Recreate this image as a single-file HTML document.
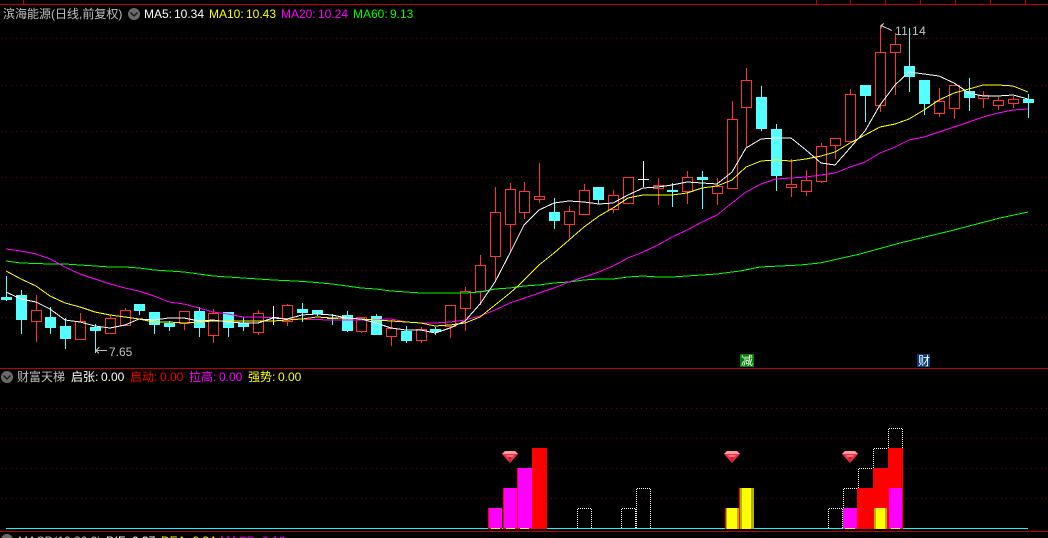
<!DOCTYPE html>
<html><head><meta charset="utf-8"><style>
html,body{margin:0;padding:0;background:#000;width:1048px;height:538px;overflow:hidden}
svg{display:block;position:absolute;left:0;top:0}
text{font-family:"Liberation Sans","WenQuanYi Zen Hei","Noto Sans CJK SC",sans-serif;font-size:12px}
</style></head><body>
<svg width="1048" height="538" viewBox="0 0 1048 538" xmlns="http://www.w3.org/2000/svg">
<rect width="1048" height="538" fill="#000"/>
<g shape-rendering="crispEdges">
<path fill="none" stroke="#800000" stroke-dasharray="1 4" d="M1 38.5H1048M1 85.5H1048M1 131.5H1048M1 177.5H1048M1 224.5H1048M1 270.5H1048M1 317.5H1048M1 408.5H1048M1 438.5H1048M1 468.5H1048M1 498.5H1048"/>
<path fill="none" stroke="#c00000" d="M0 4.5H1048M0 368.5H1048M0 531.5H1048M23.5 0V4M816.5 0V4M850.5 0V4M885.5 0V4M920.5 0V4M955.5 0V4M990.5 0V4M1025.5 0V4"/>
<!-- red wicks -->
<path fill="none" stroke="#ff3232" d="M36.5 295V342M80.5 313V340M110.5 315V334M125.5 308V326M184.5 311V330M213.5 309V343M258.5 310V335M287.5 304V326M361.5 317V333M391.5 320V346M421.5 327V343M450.5 305V338M465.5 287V331M480.5 255V305M495.5 187V282M510.5 183V253M524.5 182V219M539.5 163V203M569.5 206V238M584.5 184V215M613.5 190V213M628.5 177V204M658.5 178V205M687.5 171V204M717.5 178V205M732.5 101V189M746.5 68V147M791.5 159V197M806.5 170V196M821.5 143V183M835.5 138V159M850.5 89V142M880.5 25V112M895.5 33V95M939.5 88V117M954.5 85V119M983.5 91V108M998.5 97V110M1013.5 96V108"/>
<!-- red bodies -->
<path fill="#000" stroke="#ff3232" d="M31.5 310.5h10V321.5h-10zM75.5 321.5h10V339.5h-10zM105.5 318.5h10V333.5h-10zM120.5 310.5h10V325.5h-10zM179.5 311.5h10V323.5h-10zM208.5 313.5h10V335.5h-10zM253.5 313.5h10V332.5h-10zM282.5 305.5h10V321.5h-10zM356.5 317.5h10V331.5h-10zM386.5 328.5h10V336.5h-10zM416.5 329.5h10V340.5h-10zM445.5 305.5h10V326.5h-10zM460.5 291.5h10V308.5h-10zM475.5 265.5h10V291.5h-10zM490.5 212.5h10V256.5h-10zM505.5 189.5h10V224.5h-10zM519.5 191.5h10V212.5h-10zM534.5 196.5h10V199.5h-10zM564.5 211.5h10V224.5h-10zM579.5 190.5h10V214.5h-10zM608.5 195.5h10V209.5h-10zM623.5 177.5h10V203.5h-10zM653.5 185.5h10V188.5h-10zM682.5 177.5h10V191.5h-10zM712.5 186.5h10V193.5h-10zM727.5 119.5h10V188.5h-10zM741.5 80.5h10V107.5h-10zM786.5 184.5h10V187.5h-10zM801.5 180.5h10V191.5h-10zM816.5 146.5h10V181.5h-10zM830.5 138.5h10V145.5h-10zM845.5 94.5h10V141.5h-10zM875.5 52.5h10V105.5h-10zM890.5 44.5h10V52.5h-10zM934.5 101.5h10V113.5h-10zM949.5 85.5h10V108.5h-10zM978.5 95.5h10V98.5h-10zM993.5 100.5h10V105.5h-10zM1008.5 99.5h10V103.5h-10z"/>
<!-- cyan wicks -->
<path fill="none" stroke="#54ffff" d="M6.5 276V301M21.5 290V334M50.5 307V334M65.5 318V349M95.5 324V353M139.5 304V315M154.5 312V334M169.5 321V331M199.5 307V337M228.5 312V337M243.5 317V331M302.5 303V322M317.5 310V316M332.5 314V325M347.5 311V332M376.5 314V335M406.5 326V343M435.5 327V335M554.5 198V229M598.5 187V204M672.5 183V207M702.5 171V209M761.5 86V131M776.5 124V191M865.5 85V122M909.5 28V92M924.5 80V115M969.5 78V111M1028.5 94V118"/>
<!-- cyan bodies -->
<path fill="#54ffff" d="M1 297h11V300h-11zM16 295h11V320h-11zM45 317h11V328h-11zM60 326h11V339h-11zM90 327h11V331h-11zM134 304h11V311h-11zM149 312h11V325h-11zM164 323h11V327h-11zM194 311h11V328h-11zM223 312h11V328h-11zM238 323h11V327h-11zM297 309h11V313h-11zM312 310h11V314h-11zM327 318h11V319h-11zM342 315h11V331h-11zM371 316h11V335h-11zM401 331h11V341h-11zM430 329h11V332h-11zM549 212h11V221h-11zM593 187h11V200h-11zM667 190h11V192h-11zM697 177h11V180h-11zM756 97h11V129h-11zM771 129h11V176h-11zM860 85h11V96h-11zM904 66h11V77h-11zM919 80h11V104h-11zM964 91h11V98h-11zM1023 99h11V103h-11z"/>
<!-- white doji -->
<path fill="none" stroke="#fff" d="M273.5 306V325M268 317.5H279M643.5 161V187M638 179.5H649"/>
<!-- MA60 -->
<polyline fill="none" stroke="#00ff00" points="6,261 21,263 50,264 65,264 80,265 95,266 110,267 125,267 139,268 154,270 169,271 184,272 199,274 213,276 228,277 243,278 258,279 273,280 295,281 310,282 332,284 347,286 361,288 376,289 391,291 406,292 421,293 450,293 465,293 480,292 495,289 510,288 524,286 539,285 554,283 569,282 584,280 599,279 613,279 628,277 643,276 658,277 672,277 687,276 702,275 717,274 732,272 740,271 760,267 800,265 820,263 860,254 900,243 950,231 1000,218 1028,212"/>
<!-- MA20 -->
<polyline fill="none" stroke="#ff00ff" points="6,249 21,251 36,254 50,259 65,267 80,274 95,279 110,284 125,288 139,291 154,296 169,302 184,304 199,308 213,312 228,314 243,317 258,317 295,319 332,320 361,320 391,319 406,322 421,323 435,323 450,322 465,320 480,316 495,310 510,303 539,293 554,288 569,282 584,277 599,272 613,266 628,258 643,252 658,245 672,237 687,230 702,222 717,215 732,203 746,192 761,184 776,179 791,178 806,177 821,175 835,173 850,167 865,162 880,153 895,147 909,140 924,137 939,132 954,127 969,122 983,117 998,113 1013,110 1028,109"/>
<!-- MA10 -->
<polyline fill="none" stroke="#ffff00" points="6,271 21,279 36,286 50,296 65,303 80,307 95,312 110,315 125,317 139,319 154,322 169,322 184,323 199,322 213,321 243,321 258,321 273,321 287,320 302,319 317,317 332,318 347,318 361,319 376,320 391,321 406,322 421,323 435,326 450,325 465,323 480,317 495,305 510,293 518,286 539,265 554,253 569,240 584,227 599,216 613,208 628,198 643,195 658,195 672,195 687,193 702,188 717,186 732,180 746,167 761,161 776,160 791,161 806,159 821,156 835,152 850,143 865,135 880,127 895,124 909,119 924,110 939,100 954,93 969,89 983,85 998,85 1013,86 1028,92"/>
<!-- MA5 -->
<polyline fill="none" stroke="#ffffff" points="6,292 21,299 36,302 50,309 65,320 80,322 95,326 110,328 125,325 139,319 154,320 169,318 184,318 199,321 213,320 228,322 243,323 258,323 273,318 287,319 302,315 317,314 332,315 347,318 361,319 376,323 391,328 406,330 421,330 435,333 450,328 465,321 480,304 495,282 510,253 524,225 539,210 554,203 569,201 584,202 599,204 613,203 628,195 643,188 658,187 672,185 687,182 702,183 717,184 732,172 746,148 761,139 776,138 791,138 806,150 821,163 835,165 850,148 865,131 880,105 895,85 909,72 924,74 939,76 954,83 969,93 983,96 998,96 1013,95 1028,99"/>
<!-- price labels arrows -->
<path fill="none" stroke="#c0c0c0" d="M96 350.5H107M96 350.5l3-3M96 350.5l3 3M881 25.5l11 5M881 25.5l3-2M881 25.5v3"/>
<!-- markers -->
<rect x="740" y="354" width="14" height="13" fill="#008000"/>
<rect x="917" y="354" width="13" height="13" fill="#003c78"/>
<!-- dotted bars -->
<path fill="none" stroke="#fff" stroke-dasharray="1 1" d="M577.5 528V508.5H591.5V528M621.5 528V508.5H635.5V528M636.5 528V488.5H650.5V528M828.5 528V508.5H842.5V528M843.5 508V488.5H857.5M858.5 488V468.5H872.5M873.5 468V448.5H887.5M888.5 448V428.5H902.5V448"/>
<!-- cyan base line -->
<rect x="6" y="528" width="1022" height="1" fill="#00ffff"/>
<!-- solid bars -->
<rect x="488" y="508" width="14" height="21" fill="#ff0000"/><rect x="489" y="508" width="13" height="20" fill="#ff00ff"/><rect x="491" y="528" width="9" height="1" fill="#ffff00"/>
<rect x="503" y="488" width="14" height="41" fill="#ff0000"/><rect x="504" y="488" width="13" height="40" fill="#ff00ff"/><rect x="506" y="528" width="9" height="1" fill="#ffff00"/>
<rect x="517" y="468" width="15" height="61" fill="#ff0000"/><rect x="518" y="468" width="14" height="60" fill="#ff00ff"/><rect x="520" y="528" width="9" height="1" fill="#ffff00"/>
<rect x="532" y="448" width="15" height="81" fill="#ff0000"/>
<rect x="725" y="508" width="14" height="21" fill="#ff0000"/><rect x="726" y="508" width="13" height="21" fill="#b0b000"/><rect x="727" y="508" width="10" height="21" fill="#ffff00"/>
<rect x="739" y="488" width="15" height="41" fill="#ff0000"/><rect x="740" y="488" width="14" height="41" fill="#b0b000"/><rect x="742" y="488" width="9" height="41" fill="#ffff00"/>
<rect x="857" y="488" width="16" height="41" fill="#ff0000"/>
<rect x="873" y="468" width="15" height="61" fill="#ff0000"/>
<rect x="888" y="448" width="15" height="81" fill="#ff0000"/>
<rect x="843" y="508" width="14" height="21" fill="#ff00ff"/><rect x="845" y="528" width="10" height="1" fill="#ffff00"/>
<rect x="889" y="488" width="13" height="41" fill="#ff00ff"/><rect x="891" y="528" width="9" height="1" fill="#ffff00"/>
<rect x="874" y="508" width="13" height="21" fill="#b0b000"/><rect x="876" y="508" width="9" height="21" fill="#ffff00"/>
</g>
<!-- gems -->
<g><path d="M505 451h10l3 3-8 9-8-9z" fill="#f03048"/><path d="M505 451h10l3 3h-16z" fill="#ff9aa0"/><path d="M506 455h8l-4 5z" fill="#ff7080"/><path d="M510 463l-2-6h4z" fill="#c82030"/></g>
<g><path d="M727 451h10l3 3-8 9-8-9z" fill="#f03048"/><path d="M727 451h10l3 3h-16z" fill="#ff9aa0"/><path d="M728 455h8l-4 5z" fill="#ff7080"/><path d="M732 463l-2-6h4z" fill="#c82030"/></g>
<g><path d="M845 451h10l3 3-8 9-8-9z" fill="#f03048"/><path d="M845 451h10l3 3h-16z" fill="#ff9aa0"/><path d="M846 455h8l-4 5z" fill="#ff7080"/><path d="M850 463l-2-6h4z" fill="#c82030"/></g>
<!-- dropdown icons -->
<circle cx="134" cy="14" r="6" fill="#6a6a6a"/><path d="M130.5 12.5l3.5 3.5 3.5-3.5" fill="none" stroke="#1a1a1a" stroke-width="1.5"/>
<circle cx="7" cy="377" r="6" fill="#6a6a6a"/><path d="M3.5 375.5l3.5 3.5 3.5-3.5" fill="none" stroke="#1a1a1a" stroke-width="1.5"/>
<circle cx="7" cy="540" r="6" fill="#6a6a6a"/>
<!-- text -->
<text x="3" y="18" fill="#c0c0c0">滨海能源(日线,前复权)</text>
<text x="144" y="18" fill="#fff">MA5:</text><text x="174" y="18" fill="#fff">10.34</text>
<text x="209" y="18" fill="#ff0">MA10:</text><text x="246" y="18" fill="#ff0">10.43</text>
<text x="281" y="18" fill="#f0f">MA20:</text><text x="318" y="18" fill="#f0f">10.24</text>
<text x="353" y="18" fill="#0f0">MA60:</text><text x="390" y="18" fill="#0f0">9.13</text>
<text x="17" y="381" fill="#c0c0c0">财富天梯</text>
<text x="71" y="381" fill="#fff">启张:</text><text x="101" y="381" fill="#fff">0.00</text>
<text x="130" y="381" fill="#f00">启动:</text><text x="160" y="381" fill="#f00">0.00</text>
<text x="189" y="381" fill="#f0f">拉高:</text><text x="219" y="381" fill="#f0f">0.00</text>
<text x="248" y="381" fill="#ff0">强势:</text><text x="278" y="381" fill="#ff0">0.00</text>
<text x="109" y="356" fill="#c0c0c0">7.65</text>
<text x="895" y="35" fill="#c0c0c0" letter-spacing=".4">11.14</text>
<text x="741" y="365" fill="#fff">减</text>
<text x="918" y="365" fill="#fff">财</text>
<text x="18" y="545" fill="#c0c0c0">MACD(12,26,9)</text>
<text x="106" y="545" fill="#fff">DIF: 0.37</text>
<text x="161" y="545" fill="#ff0">DEA: 0.34</text>
<text x="220" y="545" fill="#f0f">MACD: 0.12</text>
</svg>
</body></html>
